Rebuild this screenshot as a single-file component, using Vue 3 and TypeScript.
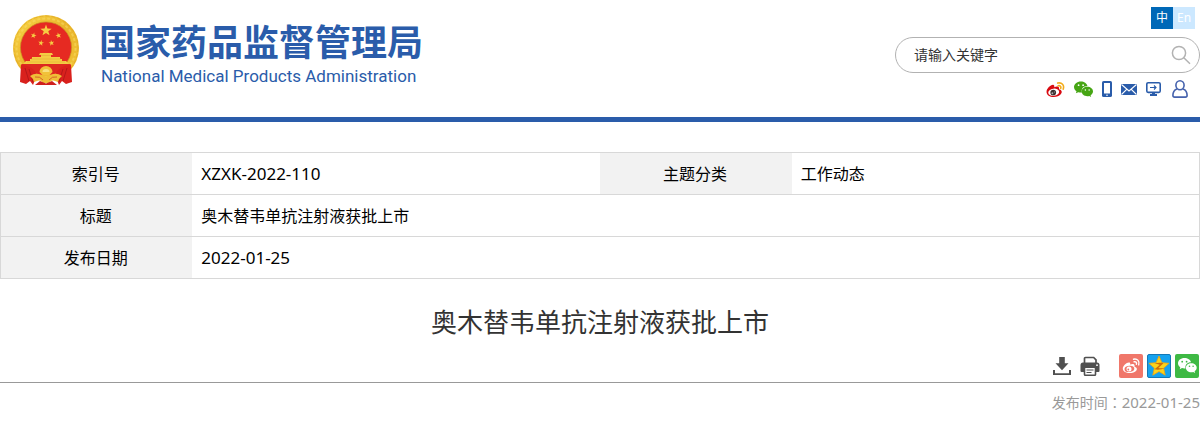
<script setup lang="ts">
import { ref } from 'vue'

const keyword = ref('')

function star(cx: number, cy: number, r: number, turn = 0, ratio = 0.4): string {
  return Array.from({ length: 10 }, (_, i) => {
    const radius = i % 2 === 0 ? r : r * ratio
    const a = ((i * 36 - 90 + turn) * Math.PI) / 180
    return `${(cx + radius * Math.cos(a)).toFixed(2)},${(cy + radius * Math.sin(a)).toFixed(2)}`
  }).join(' ')
}

const emblemStars = [
  star(33, 15.5, 6),
  star(20.5, 20.5, 3, 15),
  star(45.5, 20.5, 3, -15),
  star(28, 28, 3, 10),
  star(38.5, 28, 3, -10),
]
const qzoneStar = star(12, 12.6, 10.6, 0, 0.46)
</script>

<template>
  <header class="header">
    <a class="brand" href="#" lang="zh">
      <svg class="emblem" viewBox="0 0 66 70" aria-hidden="true">
        <defs>
          <linearGradient id="gold" x1="0" y1="0" x2="1" y2="1">
            <stop offset="0" stop-color="#f8d548" />
            <stop offset="0.5" stop-color="#eab52a" />
            <stop offset="1" stop-color="#f3c63a" />
          </linearGradient>
        </defs>
        <circle cx="33" cy="33" r="33" fill="url(#gold)" />
        <circle cx="33" cy="33" r="29.500" fill="none" stroke="#f9de68" stroke-width="2" stroke-dasharray="3 2" opacity="0.5" />
        <circle cx="33" cy="33" r="32" fill="none" stroke="#dca324" stroke-width="0.6" stroke-dasharray="4 2" />
        <circle cx="33" cy="32.500" r="25.600" fill="#e62a22" stroke="#c99722" stroke-width="0.7" />
        <polygon v-for="p in emblemStars" :key="p" :points="p" fill="#f6cd43" />
        <path d="M27 38h12l1 2h-2v2h9v2h2v2h4l3 3H10l3-3h4v-2h2v-2h9v-2h-2z" fill="#f4cd43" />
        <path d="M18 44h30M28 40.500h10M14 47h38" stroke="#e3a836" stroke-width="0.5" />
        <path d="M8 49h50l-3 4q-8 7-22 7T11 53z" fill="#dd2820" />
        <path d="M8 50Q15 50 21 55L24 60 20 70 17 66 13 69 7 67Z" fill="#d9211d" />
        <path d="M58 50Q51 50 45 55L42 60 46 70 49 66 53 69 59 67Z" fill="#d9211d" />
        <path d="M12 53 16 66M16 54 20 67M54 53 50 66M50 54 46 67" stroke="#b01618" stroke-width="0.9" fill="none" />
        <path d="M26.500 57a6.500 6 0 0 1 13 0l-3 3h-7z" fill="#f1c23a" />
        <path d="M29.500 57a3.500 3 0 0 1 7 0z" fill="#f9e07e" />
        <path d="M17 61Q23 57 28 60 33 64 38 60 43 57 49 61 46 63 45 67L39 65 36 68H30L27 65 21 67Q20 63 17 61Z" fill="#efbe38" />
        <path d="M22 62Q27 61 30 65M44 62Q39 61 36 65" stroke="#c83a1e" stroke-width="0.7" fill="none" />
        <path d="M22 70 27 66 33 68.500 39 66 44 70Z" fill="#cf201d" />
      </svg>
      <span class="brand-text">
        <span class="brand-cn">国家药品监督管理局</span>
        <span class="brand-en" lang="en">National Medical Products Administration</span>
      </span>
    </a>

    <div class="tools">
      <nav class="langs" aria-label="语言">
        <a class="lang lang-on" href="#">中</a>
        <a class="lang" href="#">En</a>
      </nav>
      <form class="search" role="search" @submit.prevent>
        <input v-model="keyword" class="search-input" type="text" placeholder="请输入关键字" aria-label="请输入关键字" />
        <button class="search-btn" type="submit" aria-label="搜索">
          <svg width="20" height="20" viewBox="0 0 20 20" fill="none" stroke="#b2b2b2" stroke-width="1.5">
            <circle cx="8" cy="8" r="6.6" />
            <path d="M12.8 12.8 19 18.8" />
          </svg>
        </button>
      </form>
      <nav class="quick" aria-label="快捷入口">
        <a href="#" aria-label="微博">
          <svg width="19" height="17" viewBox="0 0 20 18">
            <path d="M.5 11.4C.5 8 5.500 3.300 8 4.200c1 .4.9 1.500.6 2.300C11 5.500 14 5.400 13.800 7.800c0 .5-.2.8 0 1 3 .9 3.600 3 2 5C14.300 15.700 11.300 17 8 17 4 17 .5 15 .5 11.400z" fill="#d80a11" />
            <ellipse cx="8.100" cy="11.900" rx="5.800" ry="3.800" fill="#fff" transform="rotate(-7 8.100 11.900)" />
            <circle cx="7.600" cy="12.200" r="3" fill="#3b3030" />
            <circle cx="6.700" cy="13" r="1" fill="#aaa" />
            <circle cx="8.700" cy="11.600" r=".5" fill="#fff" />
            <path d="M12.300 2.200C16.700 1.200 19.600 4.300 18.200 8.600M12.900 5c2-.4 3.300.8 2.600 2.800" fill="none" stroke="#f3ac1b" stroke-width="1.700" stroke-linecap="round" />
          </svg>
        </a>
        <a href="#" aria-label="微信">
          <svg width="19" height="16" viewBox="0 0 19 16" fill="#46a514">
            <path d="M6.800.4C3 .4 0 2.900 0 6c0 1.800 1 3.300 2.500 4.300L1.900 12.300 4.200 11.200C5.800 11.700 7.300 11.600 8 11.500 6.800 7.800 9.500 5 13.500 5 12.900 2.400 10.200.4 6.800.4z" />
            <path d="M13.300 5.800c-3.200 0-5.600 2.100-5.600 4.700s2.400 4.700 5.600 4.700c.7 0 1.400-.1 2-.3l1.800 1-.5-1.700c1.500-.9 2.400-2.200 2.400-3.700 0-2.600-2.500-4.700-5.700-4.700z" />
            <g fill="#fff"><circle cx="4.600" cy="4.200" r=".9" /><circle cx="9.100" cy="4.200" r=".9" /><circle cx="11.400" cy="9" r=".75" /><circle cx="15.100" cy="9" r=".75" /></g>
          </svg>
        </a>
        <a href="#" aria-label="移动版">
          <svg width="10" height="16" viewBox="0 0 10 16">
            <rect width="10" height="16" rx="1.600" fill="#2a5caa" />
            <rect x="2" y="2" width="6" height="10.500" fill="#fff" />
            <circle cx="5" cy="14.200" r=".8" fill="#fff" />
          </svg>
        </a>
        <a href="#" aria-label="邮箱">
          <svg width="16" height="11" viewBox="0 0 16 11">
            <rect width="16" height="11" fill="#2a5caa" />
            <path d="M.5.500 8 7 15.500.500M.5 10.500 5.700 5.400M15.500 10.500 10.300 5.400" fill="none" stroke="#fff" stroke-width="1.100" />
          </svg>
        </a>
        <a href="#" aria-label="网站">
          <svg width="15" height="14" viewBox="0 0 15 14">
            <rect x=".8" y=".8" width="13.400" height="9.600" rx="1.300" fill="#fff" stroke="#2a5caa" stroke-width="1.600" />
            <path d="M4 5.500h6M8 3.500l2 2-2 2" fill="none" stroke="#2a5caa" stroke-width="1.100" />
            <path d="M6 10.500h3V12h2v2H4v-2h2z" fill="#2a5caa" />
          </svg>
        </a>
        <a class="user" href="#" aria-label="个人中心">
          <svg width="16" height="18" viewBox="0 0 16 18" fill="none" stroke="#4562ad" stroke-width="1.600">
            <ellipse cx="8" cy="5.300" rx="4.100" ry="4.500" />
            <path d="M4.900 9C2.400 10 .9 12.400.9 15.300c0 1.200.6 1.800 1.700 1.800h10.800c1.100 0 1.700-.6 1.700-1.800 0-2.900-1.500-5.300-4-6.300" />
          </svg>
        </a>
      </nav>
    </div>
  </header>

  <main>
    <table class="info">
      <colgroup><col class="c-key" /><col class="c-val" /><col class="c-key" /><col class="c-val" /></colgroup>
      <tbody>
        <tr>
          <th scope="row">索引号</th>
          <td><span class="latin">XZXK-2022-110</span></td>
          <th scope="row">主题分类</th>
          <td>工作动态</td>
        </tr>
        <tr>
          <th scope="row">标题</th>
          <td colspan="3">奥木替韦单抗注射液获批上市</td>
        </tr>
        <tr>
          <th scope="row">发布日期</th>
          <td colspan="3"><span class="latin">2022-01-25</span></td>
        </tr>
      </tbody>
    </table>

    <article>
      <h1>奥木替韦单抗注射液获批上市</h1>
      <div class="actions">
        <button type="button" aria-label="下载">
          <svg width="20" height="20" viewBox="0 0 20 20" fill="#505050">
            <path d="M7.200 1h5.600v6.300h3.700L10 14.200 3.500 7.300h3.700z" />
            <path d="M1 14h2v3.200h14V14h2v5H1z" />
          </svg>
        </button>
        <button type="button" aria-label="打印">
          <svg width="20" height="20" viewBox="0 0 20 20">
            <path d="M4.500 7V2.500Q4.500 1.500 5.500 1.500h8.200l2.300 2.300V7" fill="#fff" stroke="#505050" stroke-width="1.700" />
            <path d="M3 6.500h14q2.500 0 2.500 2.500v6q0 1-1 1H1.500q-1 0-1-1V9q0-2.500 2.500-2.500z" fill="#505050" />
            <rect x="4.500" y="11.200" width="11" height="8" rx=".8" fill="#fff" stroke="#505050" stroke-width="1.600" />
            <path d="M6.500 14h7M6.500 16.500h5" stroke="#505050" stroke-width="1.200" />
            <circle cx="17" cy="9.200" r=".9" fill="#fff" />
          </svg>
        </button>
        <a class="share share-first" href="#" aria-label="分享到微博">
          <svg width="24" height="24" viewBox="0 0 24 24">
            <rect width="24" height="24" rx="2" fill="#f0776a" />
            <path d="M3.800 14.600c0-3 4.200-6.700 6.600-6.100 1 .3.900 1.300.6 2.100 2.200-.8 4.700-.9 4.600 1.200 0 .4-.2.700 0 .9 2.500.8 2.900 2.500 1.600 4-1.300 1.600-3.800 2.400-6.600 2.400-3.400 0-6.800-1.500-6.800-4.500z" fill="#fff" />
            <ellipse cx="10.400" cy="14.800" rx="4.900" ry="3.100" fill="#f0776a" transform="rotate(-7 10.400 14.800)" />
            <circle cx="10" cy="15" r="2.500" fill="#fff" />
            <circle cx="9.300" cy="15.500" r=".9" fill="#f0776a" />
            <path d="M14.500 5.200c4-.8 6.400 2 5.200 5.700M15.100 7.800c1.900-.3 2.900.7 2.300 2.500" fill="none" stroke="#fff" stroke-width="1.400" stroke-linecap="round" />
          </svg>
        </a>
        <a class="share" href="#" aria-label="分享到QQ空间">
          <svg width="24" height="24" viewBox="0 0 24 24">
            <rect x=".5" y=".5" width="23" height="23" rx="1.500" fill="#16a2ee" stroke="#1478b5" />
            <polygon :points="qzoneStar" fill="#fbd31b" stroke="#f2a50d" stroke-width=".8" stroke-linejoin="round" />
            <path d="M7.500 9.500c3-.8 6-.8 9-.3L11.300 14c2.200.5 4.500.4 6.300 0-2.800 1.600-6.700 2-10 1.300l5.200-4.500c-1.800-.6-3.500-.9-5.300-1.300z" fill="#cf6b0a" />
          </svg>
        </a>
        <a class="share" href="#" aria-label="分享到微信">
          <svg width="24" height="24" viewBox="0 0 24 24">
            <rect width="24" height="24" rx="2" fill="#3eb944" />
            <path d="M9.400 4C5.700 4 3 6.300 3 9.200c0 1.700.9 3.100 2.300 4.100l-.6 2 2.300-1.200c1.200.4 2.400.4 3.500.3C9.800 10.700 12.400 8.200 16 8.200 15.500 5.800 12.800 4 9.400 4z" fill="#fff" />
            <path d="M16.300 9.200c-3.100 0-5.400 2-5.400 4.500s2.300 4.600 5.400 4.600c.7 0 1.300-.1 1.900-.3l1.900 1.100-.5-1.800c1.300-.9 2.100-2.100 2.100-3.600 0-2.500-2.400-4.500-5.400-4.500z" fill="#fff" />
            <g fill="#3eb944"><circle cx="7.200" cy="7.700" r=".9" /><circle cx="11.600" cy="7.700" r=".9" /><circle cx="14.500" cy="12.300" r=".8" /><circle cx="18.100" cy="12.300" r=".8" /></g>
          </svg>
        </a>
      </div>
      <p class="published">发布时间：<time datetime="2022-01-25">2022-01-25</time></p>
    </article>
  </main>
</template>

<style>
body {
  margin: 0;
  background: #fff;
  font-family: "Noto Sans", "Noto Sans CJK SC", sans-serif;
}
</style>

<style scoped>
a {
  color: inherit;
  text-decoration: none;
}
button {
  padding: 0;
  border: 0;
  background: none;
  cursor: pointer;
}
svg {
  display: block;
}
.header {
  display: flex;
  justify-content: space-between;
  align-items: flex-start;
  min-height: 117px;
  border-bottom: 5px solid #2a5caa;
}
.brand {
  display: flex;
  gap: 20px;
  padding: 15px 0 0 13px;
  color: #2a5caa;
}
.emblem {
  width: 66px;
  height: 70px;
}
.brand-text {
  display: flex;
  flex-direction: column;
  padding-top: 10px;
}
.brand-cn {
  font-family: "Liberation Sans", "Noto Sans CJK SC", sans-serif;
  font-size: 36px;
  font-weight: 700;
  line-height: 38px;
}
.brand-en {
  padding-left: 2px;
  font-family: Roboto, sans-serif;
  font-size: 17px;
  line-height: 26px;
}
.tools {
  display: flex;
  flex-direction: column;
  align-items: flex-end;
  padding-top: 7px;
}
.langs {
  display: flex;
  margin-right: 5px;
}
.lang {
  width: 22px;
  background: #cce8ff;
  color: #fff;
  font-size: 12px;
  line-height: 22px;
  text-align: center;
}
.lang-on {
  background: #0068b7;
}
.search {
  display: flex;
  align-items: center;
  box-sizing: border-box;
  width: 305px;
  height: 36px;
  margin-top: 8px;
  padding: 0 8px 0 18px;
  border: 1px solid #b2b2b2;
  border-radius: 18px;
}
.search-input {
  flex: 1;
  min-width: 0;
  padding: 0;
  border: 0;
  outline: 0;
  background: none;
  color: #333;
  font-family: inherit;
  font-size: 14px;
  line-height: 20px;
}
.search-input::placeholder {
  color: #333;
  opacity: 1;
}
.quick {
  display: flex;
  align-items: center;
  gap: 9px;
  margin: 7px 12px 0 0;
}
.user {
  padding-left: 2px;
}
.info {
  width: 100%;
  margin-top: 30px;
  border: 1px solid #d8d8d8;
  border-collapse: collapse;
  table-layout: fixed;
  color: #000;
  font-size: 16px;
  line-height: 24px;
}
.c-key {
  width: 16%;
}
.c-val {
  width: 34%;
}
.info tr {
  border-bottom: 1px solid #d8d8d8;
}
.info th {
  height: 41px;
  padding: 0 2px 0 0;
  background: #f2f2f2;
  font-weight: 400;
  text-align: center;
}
.info td {
  padding: 0 9px;
}
.latin {
  font-size: 17px;
}
h1 {
  margin: 24px 0 0;
  color: #333;
  font-size: 26px;
  font-weight: 400;
  line-height: 38px;
  text-align: center;
}
.actions {
  display: flex;
  justify-content: flex-end;
  align-items: center;
  gap: 8px;
  margin-top: 13px;
  padding: 0 1px 4px 0;
  border-bottom: 1px solid #999;
}
.share + .share {
  margin-left: -4px;
}
.share-first {
  margin-left: 11px;
}
.published {
  margin: 8px 0 0;
  color: #999;
  font-family: "Noto Sans", "Noto Sans CJK TC", sans-serif;
  font-size: 14px;
  line-height: 22px;
  text-align: right;
}
.published time {
  font-size: 15px;
}
</style>
